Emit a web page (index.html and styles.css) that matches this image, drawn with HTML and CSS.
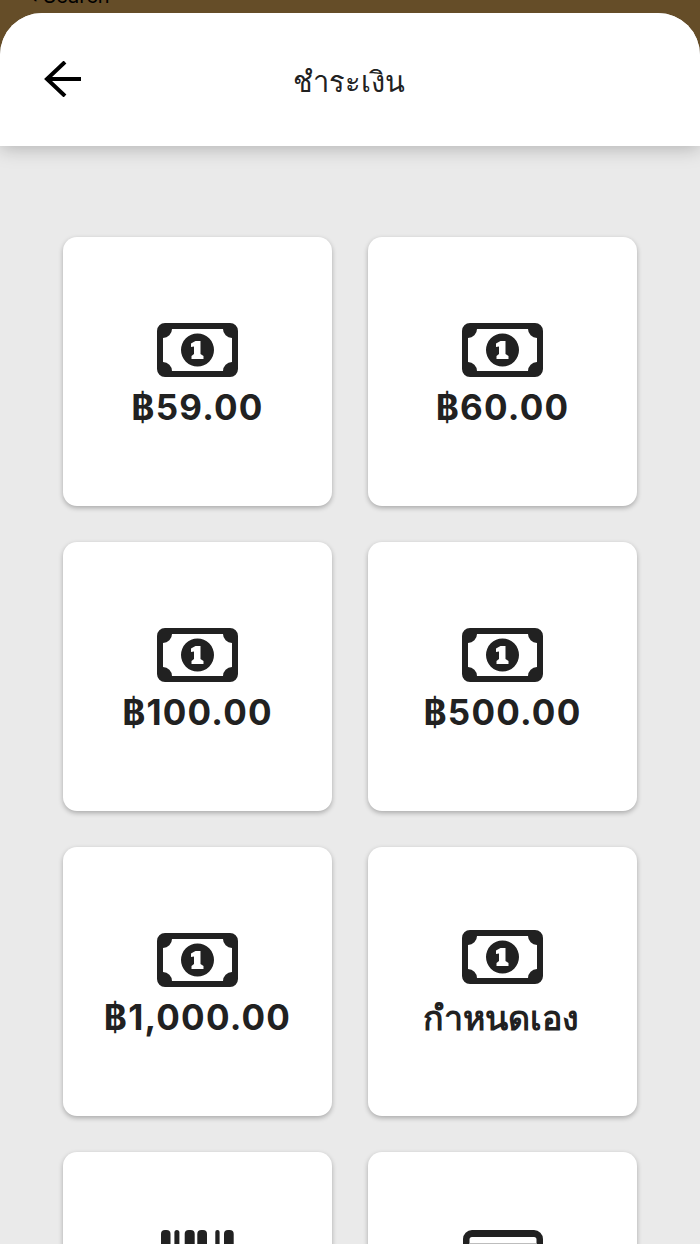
FILE: index.html
```html
<!DOCTYPE html>
<html lang="th">
<head>
  <meta charset="UTF-8" />
  <title>ชำระเงิน</title>
  <link rel="stylesheet" href="styles.css">
</head>
<body>

<svg class="defs" width="0" height="0">
  <symbol id="bill" viewBox="0 0 81 54">
    <path fill-rule="evenodd" d="M8 0H73A8 8 0 0 1 81 8V46A8 8 0 0 1 73 54H8A8 8 0 0 1 0 46V8A8 8 0 0 1 8 0ZM15 6A9 9 0 0 1 6 15V39A9 9 0 0 1 15 48H66A9 9 0 0 1 75 39V15A9 9 0 0 1 66 6Z"/>
    <path fill-rule="evenodd" d="M40.500 10.500A16.500 16.500 0 1 1 40.500 43.500A16.500 16.500 0 1 1 40.500 10.500ZM38.500 18L34 20.500V24L37 23.500V31L34.500 33V36H46.500V33L43.500 31V18Z"/>
  </symbol>
</svg>

<div class="status">‹ Search</div>

<div class="sheet">
  <!-- Header -->
  <div class="header">
    <svg class="back" viewBox="0 0 38 36" width="38" height="36">
      <path d="M37 18H3M21 1L3 18L21 35" fill="none" stroke="#000" stroke-width="4"/>
    </svg>
    <h1>ชำระเงิน</h1>
  </div>

  <!-- Amounts -->
  <div class="amounts">
    <div class="amount-card">
      <svg class="bill"><use href="#bill"/></svg>
      <p class="amount">฿59.00</p>
    </div>
    <div class="amount-card">
      <svg class="bill"><use href="#bill"/></svg>
      <p class="amount">฿60.00</p>
    </div>
    <div class="amount-card">
      <svg class="bill"><use href="#bill"/></svg>
      <p class="amount">฿100.00</p>
    </div>
    <div class="amount-card">
      <svg class="bill"><use href="#bill"/></svg>
      <p class="amount">฿500.00</p>
    </div>
    <div class="amount-card">
      <svg class="bill"><use href="#bill"/></svg>
      <p class="amount">฿1,000.00</p>
    </div>
    <div class="amount-card">
      <svg class="bill"><use href="#bill"/></svg>
      <p class="amount custom">กำหนดเอง</p>
    </div>
    <div class="amount-card">
      <svg class="tall-icon" viewBox="0 0 73 54" width="73" height="54">
        <rect x="0" width="9.500" height="54" rx="4"/>
        <rect x="13.400" width="5" height="54" rx="2.500"/>
        <rect x="23.700" width="10" height="54" rx="4"/>
        <rect x="36.300" width="9.700" height="54" rx="4"/>
        <rect x="54.300" width="4.300" height="54" rx="2"/>
        <rect x="63" width="9.700" height="54" rx="4"/>
      </svg>
    </div>
    <div class="amount-card">
      <svg class="tall-icon" viewBox="0 0 80 54" width="80" height="54">
        <path fill-rule="evenodd" d="M9 0H71A9 9 0 0 1 80 9V54H0V9A9 9 0 0 1 9 0ZM9 7A2.500 2.500 0 0 0 6.500 9.500V54H73.500V9.500A2.500 2.500 0 0 0 71 7Z"/>
        <rect class="stripe" x="6.500" y="13" width="67" height="41"/>
      </svg>
    </div>
  </div>
</div>

</body>
</html>
```

FILE: styles.css
```css
body {
  margin: 0;
  height: 1244px;
  overflow: hidden;
  background-color: #654d28;
  font-family: "Inter", "Noto Sans", sans-serif;
  color: #212121;
}

.defs {
  display: block;
}

.status {
  height: 27px;
  margin-top: -14px;
  padding-left: 30px;
  font-size: 20px;
  line-height: 21px;
  color: #000;
  overflow: hidden;
}

.sheet {
  height: 1231px;
  background-color: #eaeaea;
  border-radius: 42px 42px 0 0;
  overflow: hidden;
}

.header {
  position: relative;
  z-index: 1;
  height: 133px;
  background: #fff;
  box-shadow: 0 2px 18px rgba(0,0,0,0.25);
  display: flex;
  align-items: center;
  justify-content: center;
}

.back {
  position: absolute;
  left: 44px;
  top: 48px;
}

h1 {
  margin: 5px 2px 0 0;
  font-size: 29px;
  font-weight: 400;
  line-height: 40px;
}

.amounts {
  display: grid;
  grid-template-columns: 269px 269px;
  grid-auto-rows: 269px;
  gap: 36px;
  padding: 91px 63px 0;
}

.amount-card {
  background: #fff;
  border-radius: 14px;
  box-shadow: 0 2px 5px rgba(0,0,0,0.28);
  display: flex;
  flex-direction: column;
  align-items: center;
  justify-content: center;
}

.amount-card svg {
  fill: #212121;
  flex: none;
}

.bill {
  width: 81px;
  height: 54px;
}

/* label of these two is below the fold */
.amount-card .tall-icon {
  margin-bottom: 59px;
}

.stripe {
  fill: #bdbdbd;
}

.amount {
  margin: 18px 0 0;
  font-size: 35px;
  font-weight: 700;
  line-height: 25px;
  letter-spacing: 1.2px;
}

.amount.custom {
  margin-top: 17px;
  padding: 1px 3px 0 0;
  font-size: 34px;
  line-height: 32px;
  letter-spacing: 0;
}
```
